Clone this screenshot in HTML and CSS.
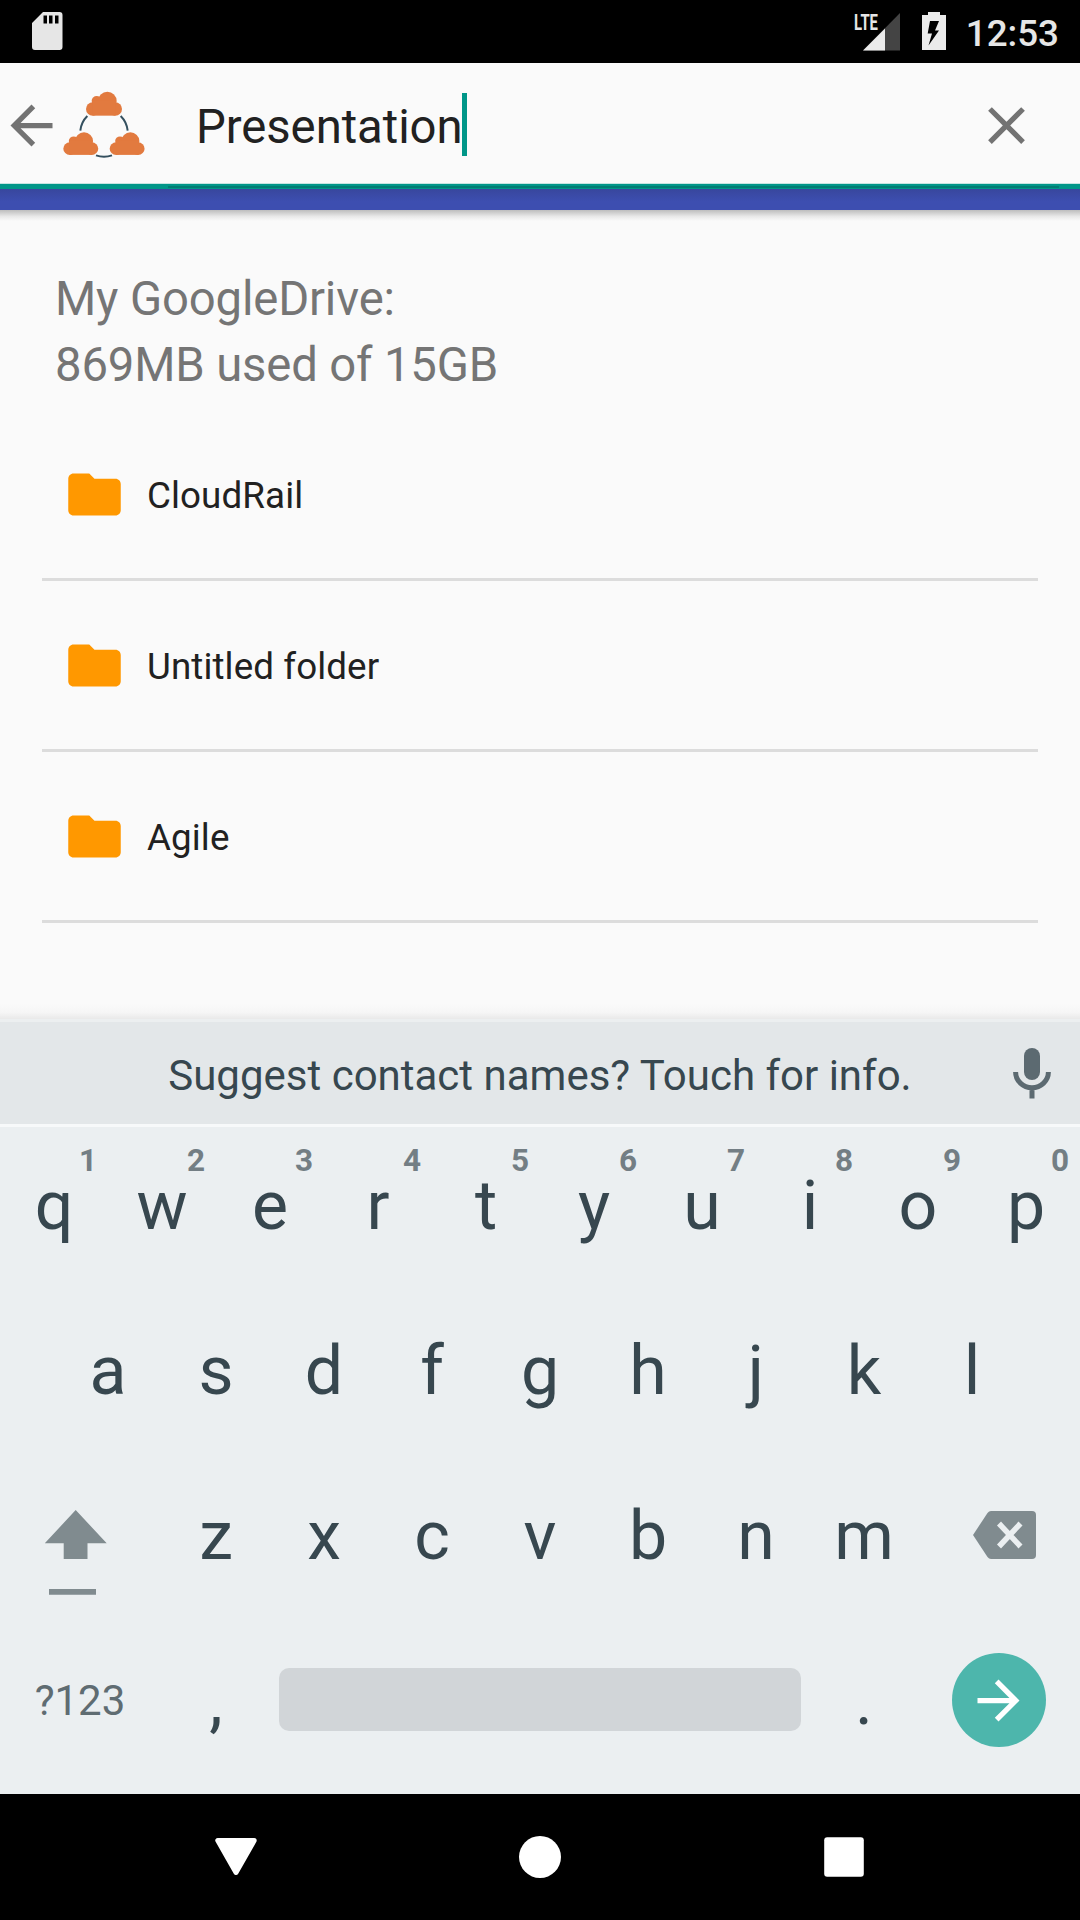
FILE: index.html
```
<!DOCTYPE html>
<html lang="en">
<head>
<meta charset="utf-8">
<title>GoogleDrive</title>
<link rel="stylesheet" href="styles.css">
</head>
<body>
<div class="screen">
  <header class="status">
    <svg class="sd" width="31" height="38" viewBox="0 0 31 38"><path fill="#e6e6e6" fill-rule="evenodd" d="M11 0H27.500Q30.500 0 30.500 3V35Q30.500 38 27.500 38H3Q0 38 0 35V11ZM11.500 3.500V11.500H15V3.500ZM17 3.500V11.500H20.500V3.500ZM23 3.500V11.500H26.500V3.500Z"/></svg>
    <div class="status-right">
      <svg class="signal" width="52" height="52" viewBox="-4 -12 52 52">
        <path fill="#444" d="M46 1V38.500H9Z"/>
        <path fill="#ebebeb" d="M31 16.500V38.500H9Z"/>
        <path fill="#000" d="M0 0H26V18H0Z"/>
        <text class="lte" x="0" y="18" textLength="24" lengthAdjust="spacingAndGlyphs">LTE</text>
      </svg>
      <svg width="24" height="40" viewBox="0 0 24 40"><path fill="#ebebeb" fill-rule="evenodd" d="M6 0H18V3H24V38H0V3H6ZM8 9L5.700 21.500H10L6.500 33.500L17 18.500H13L17 9Z"/></svg>
      <span class="clock">12:53</span>
    </div>
  </header>

  <div class="toolbar">
    <svg class="back" width="63" height="63" viewBox="0 0 24 24"><path fill="#737373" d="M20 11H7.830l5.590-5.590L12 4l-8 8 8 8 1.410-1.410L7.830 13H20v-2z"/></svg>
    <svg class="logo" width="82" height="68" viewBox="0 0 246 204">
      <defs><g id="cloud"><circle cx="20" cy="52" r="20"/><circle cx="88" cy="52" r="20"/><circle cx="32" cy="28" r="15"/><circle cx="64" cy="28" r="28"/><rect x="20" y="26" width="68" height="46"/></g></defs>
      <g fill="none" stroke="#34505f" stroke-width="6"><path d="M73 75A72 72 0 0 0 52 119"/><path d="M173 75A72 72 0 0 1 194 119"/><path d="M99 193A72 72 0 0 0 147 193"/></g>
      <g fill="#e27a3f"><use href="#cloud" x="69" y="2"/><use href="#cloud" transform="translate(1 124) scale(.97 .94)"/><use href="#cloud" transform="translate(140 124) scale(.97 .94)"/></g>
    </svg>
    <div class="query"><span class="query-text">Presentation</span><span class="caret"></span></div>
    <svg class="close" width="63" height="63" viewBox="0 0 24 24"><path fill="#737373" d="M19 6.410L17.590 5 12 10.590 6.410 5 5 6.410 10.590 12 5 17.590 6.410 19 12 13.410 17.590 19 19 17.590 13.410 12z"/></svg>
  </div>
  <div class="underline"><div class="underline-inner"></div></div>
  <div class="appbar"></div>

  <main class="content">
    <p class="usage">My GoogleDrive:<br>869MB used of 15GB</p>
    <ul class="files">
      <li class="file"><svg class="folder" width="63" height="63" viewBox="0 0 24 24"><path d="M10 4H4c-1.100 0-1.990.9-1.990 2L2 18c0 1.100.9 2 2 2h16c1.100 0 2-.9 2-2V8c0-1.100-.9-2-2-2h-8l-2-2z"/></svg><span class="name">CloudRail</span></li>
      <li class="file"><svg class="folder" width="63" height="63" viewBox="0 0 24 24"><path d="M10 4H4c-1.100 0-1.990.9-1.990 2L2 18c0 1.100.9 2 2 2h16c1.100 0 2-.9 2-2V8c0-1.100-.9-2-2-2h-8l-2-2z"/></svg><span class="name">Untitled folder</span></li>
      <li class="file"><svg class="folder" width="63" height="63" viewBox="0 0 24 24"><path d="M10 4H4c-1.100 0-1.990.9-1.990 2L2 18c0 1.100.9 2 2 2h16c1.100 0 2-.9 2-2V8c0-1.100-.9-2-2-2h-8l-2-2z"/></svg><span class="name">Agile</span></li>
    </ul>
    <div class="keyboard-shadow"></div>
  </main>

  <section class="keyboard">
    <div class="suggest">
      <span class="suggest-text">Suggest contact names? Touch for info.</span>
      <svg class="mic" width="38" height="52" viewBox="0 0 38 52"><rect x="11" y="0" width="16" height="32" rx="8" fill="#5c6a71"/><path d="M2.600 24A16.200 15.500 0 0 0 35.400 24M19 39V50.500" fill="none" stroke="#5c6a71" stroke-width="5"/></svg>
    </div>
    <div class="keys">
      <div class="row">
        <div class="key">q<span class="hint">1</span></div><div class="key">w<span class="hint">2</span></div><div class="key">e<span class="hint">3</span></div><div class="key">r<span class="hint">4</span></div><div class="key">t<span class="hint">5</span></div><div class="key">y<span class="hint">6</span></div><div class="key">u<span class="hint">7</span></div><div class="key">i<span class="hint">8</span></div><div class="key">o<span class="hint">9</span></div><div class="key">p<span class="hint">0</span></div>
      </div>
      <div class="row">
        <div class="key">a</div><div class="key">s</div><div class="key">d</div><div class="key">f</div><div class="key">g</div><div class="key">h</div><div class="key">j</div><div class="key">k</div><div class="key">l</div>
      </div>
      <div class="row">
        <div class="key wide shift"><svg width="64" height="86" viewBox="0 0 64 86"><path fill="#808b8f" d="M31.700 0L62.700 33.300H43.500V49H19.700V33.300H.8ZM5 79H52V84.700H5Z"/></svg></div>
        <div class="key">z</div><div class="key">x</div><div class="key">c</div><div class="key">v</div><div class="key">b</div><div class="key">n</div><div class="key">m</div>
        <div class="key wide delete"><svg width="63" height="48" viewBox="0 0 63 48"><path fill="#808b8f" d="M18 0H59Q63 0 63 4V44Q63 48 59 48H18Q16 48 14.500 46L0 24L14.500 2Q16 0 18 0Z"/><path d="M26 12.500L47.500 35.500M47.500 12.500L26 35.500" stroke="#ebeff1" stroke-width="5.500"/></svg></div>
      </div>
      <div class="row">
        <div class="key wide symbols">?123</div>
        <div class="key">,</div>
        <div class="space"></div>
        <div class="key">.</div>
        <div class="key wide enter"><div class="enter-disc"><svg width="63" height="63" viewBox="0 0 24 24"><path fill="#fff" d="M12 4l-1.410 1.410L16.170 11H4v2h12.170l-5.580 5.590L12 20l8-8z"/></svg></div></div>
      </div>
    </div>
  </section>

  <nav class="nav">
    <svg width="44" height="44" viewBox="0 0 44 44"><path d="M3.800 5.500H40.200L22 37.500Z" fill="#fff" stroke="#fff" stroke-width="5" stroke-linejoin="round"/></svg>
    <svg width="44" height="44" viewBox="0 0 44 44"><circle cx="22" cy="22" r="21" fill="#fff"/></svg>
    <svg width="44" height="44" viewBox="0 0 44 44"><rect x="2.200" y="2.300" width="39.600" height="39.400" rx="3" fill="#fff"/></svg>
  </nav>
</div>
</body>
</html>
```
FILE: styles.css
```
* { box-sizing: border-box; margin: 0; padding: 0; }
body { width: 1080px; height: 1920px; overflow: hidden; font-family: Roboto, sans-serif; background: #fafafa; }
svg { display: block; flex: none; }
.screen { width: 1080px; height: 1920px; display: flex; flex-direction: column; }

.status { height: 63px; flex: none; background: #000; display: flex; justify-content: space-between; padding: 12px 21px 0 32px; }
.status-right { display: flex; gap: 20px; }
.signal { margin-top: -12px; }
.lte { font-family: Roboto, sans-serif; font-weight: 700; font-size: 22.500px; fill: #e6e6e6; }
.clock { color: #e6e6e6; font-size: 36.750px; font-weight: 500; line-height: 43px; }

.toolbar { height: 120px; flex: none; display: flex; align-items: center; padding-top: 4px; }
.logo { margin-top: -1px; }
.query { display: flex; align-items: center; flex: 1; margin-left: 51px; font-size: 47.250px; line-height: 63px; color: #212121; }
.query-text { padding-top: 4px; letter-spacing: -0.05px; }
.caret { width: 5px; height: 63px; margin: -2px 0 0 -1px; background: #009688; }
.close { margin: 0 42px 0 0; }
.underline { height: 6px; flex: none; border-top: 1px solid #c5e4e1; background: #009688; padding: 2px 21px 0 168px; }
.underline-inner { height: 2px; background: #007d73; }
.appbar { height: 21px; flex: none; background: linear-gradient(#38479d, #3d4eb0 60%); }

.content { height: 809px; flex: none; display: flex; flex-direction: column; background: #fafafa; }
.content::before { content: ""; height: 11px; flex: none; margin-bottom: 45px; background: linear-gradient(#bdbdbd, #e9e9e9 60%, #fafafa); }
.usage { padding-left: 55px; font-size: 47.250px; line-height: 66px; letter-spacing: -0.15px; color: #757575; }
.files { list-style: none; padding: 12px 42px 0; }
.file { height: 171px; display: flex; align-items: center; gap: 21px; padding-left: 21px; border-bottom: 3px solid #dcdcdc; font-size: 36.750px; letter-spacing: 0.1px; color: #212121; }
.name { padding-top: 2px; }
.folder { fill: #ff9800; }
.keyboard-shadow { height: 15px; margin-top: auto; background: linear-gradient(#fafafa, #f6f6f6 55%, #e9e9e9); }

.keyboard { height: 775px; flex: none; background: #ebeff1; }
.suggest { height: 108px; border-top: 3px solid #eceff0; border-bottom: 3px solid #f7f9fa; background: #e3e7e9; display: grid; grid-template-columns: 1fr auto 1fr; align-items: center; padding-right: 29px; }
.suggest-text { grid-column: 2; margin-left: 29px; font-size: 42px; line-height: 102px; padding-top: 3px; margin-bottom: -3px; color: #37474f; white-space: nowrap; }
.mic { justify-self: end; margin-top: 2px; }
.keys { display: flex; flex-direction: column; }
.row { height: 165px; display: flex; justify-content: center; }
.key { position: relative; width: 108px; text-align: center; font-size: 68px; line-height: 158px; color: #37474f; }
.hint { position: absolute; top: 15px; right: 11px; font-size: 31.500px; font-weight: 700; line-height: 37px; color: #737e84; }
.wide { width: 162px; }
.shift { padding: 53px 0 0 44px; }
.delete { padding: 54px 0 0 55px; }
.symbols { padding-right: 2px; font-size: 42px; color: #5f6c72; }
.space { width: 522px; height: 63px; margin: 46px 9px 0; border-radius: 10px; background: #d1d5d8; }
.enter { padding: 31px 0 0 34px; }
.enter-disc { width: 94px; height: 94px; padding-right: 2px; border-radius: 50%; background: #4db6ac; display: flex; align-items: center; justify-content: center; }

.nav { height: 126px; flex: none; background: #000; display: flex; justify-content: center; align-items: center; gap: 260px; }
```
